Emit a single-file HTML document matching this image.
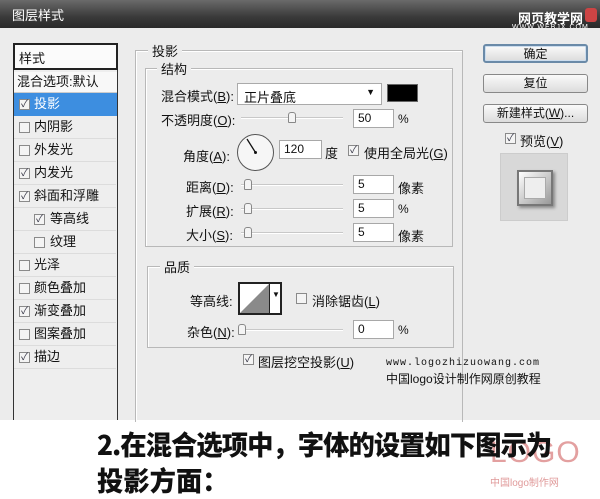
<!DOCTYPE html>
<html><head><meta charset="utf-8"><style>
*{margin:0;padding:0;box-sizing:border-box}
body{width:600px;height:496px;overflow:hidden;background:#fff;font-family:"Liberation Sans","Noto Sans CJK SC",sans-serif;font-size:12px;color:#111;position:relative}
.a{position:absolute;white-space:nowrap}
.title{left:0;top:0;width:600px;height:28px;background:linear-gradient(#6a6a6a,#3a3a3a 60%,#2a2a2a)}
.dlg{left:0;top:28px;width:600px;height:392px;background:#ececec}
.box{border:1px solid #b8b8b8;box-shadow:inset 1px 1px 0 #fff}
.cb{position:absolute;width:11px;height:11px;border:1px solid #8a8a8a;background:#f4f4f4;font-size:10px;line-height:9px;text-align:center;color:#334}
.inp{position:absolute;background:#fff;border:1px solid #a8a8a8;height:19px;padding-left:4px;line-height:17px;font-size:12px}
.sl{position:absolute;height:2px;background:#c8c8c8;border-bottom:1px solid #fff}
.th{position:absolute;width:8px;height:11px;border:1px solid #888;border-radius:3px 3px 1px 1px;background:#f4f4f4}
.btn{position:absolute;left:483px;width:105px;height:19px;border:1px solid #888;border-radius:3px;background:linear-gradient(#fafafa,#dcdcdc);text-align:center;line-height:17px;font-size:12px}
.row{position:absolute;left:14px;width:102px;height:23px;border-bottom:1px solid #dcdcdc;line-height:22px;padding-left:20px}
.row .cb{left:5px;top:6px}
</style></head><body>
<div class="a title"></div>
<div class="a" style="left:12px;top:5px;color:#fff;font-size:13px">图层样式</div>
<div class="a" style="left:518px;top:8px;color:#fff;font-size:13px;font-weight:bold">网页教学网</div>
<div class="a" style="left:512px;top:24px;color:#fff;font-size:7px;letter-spacing:1px">WWW.WEBJX.COM</div>
<div class="a" style="left:585px;top:8px;width:12px;height:14px;background:#c44;border-radius:3px"></div>
<div class="a dlg"></div>

<div class="a" style="left:13px;top:43px;width:105px;height:377px;border:1px solid #333;border-bottom:none;background:#eee"></div>
<div class="a" style="left:13px;top:43px;width:105px;height:27px;border:2px solid #222;background:#fbfbfb;padding:3px 4px;font-size:13px">样式</div>
<div class="a" style="left:14px;top:72px;width:103px;height:21px;border-bottom:1px solid #ccc;background:#f8f8f8;padding-left:3px;line-height:20px;font-size:13px">混合选项:默认</div>
<div class="a" style="left:14px;top:93px;width:103px;height:23px;background:#3d8ee0;color:#fff;line-height:22px;padding-left:20px;font-size:13px"><span class="cb" style="left:5px;top:6px">✓</span>投影</div>
<div class="row" style="top:116px;font-size:13px"><span class="cb"></span>内阴影</div>
<div class="row" style="top:139px;font-size:13px"><span class="cb"></span>外发光</div>
<div class="row" style="top:162px;font-size:13px"><span class="cb">✓</span>内发光</div>
<div class="row" style="top:185px;font-size:13px"><span class="cb">✓</span>斜面和浮雕</div>
<div class="row" style="top:208px;font-size:13px;padding-left:36px"><span class="cb" style="left:20px">✓</span>等高线</div>
<div class="row" style="top:231px;font-size:13px;padding-left:36px"><span class="cb" style="left:20px"></span>纹理</div>
<div class="row" style="top:254px;font-size:13px"><span class="cb"></span>光泽</div>
<div class="row" style="top:277px;font-size:13px"><span class="cb"></span>颜色叠加</div>
<div class="row" style="top:300px;font-size:13px"><span class="cb">✓</span>渐变叠加</div>
<div class="row" style="top:323px;font-size:13px"><span class="cb"></span>图案叠加</div>
<div class="row" style="top:346px;font-size:13px"><span class="cb">✓</span>描边</div>

<div class="a box" style="left:135px;top:50px;width:328px;height:372px;border-bottom:none"></div>
<div class="a" style="left:148px;top:41px;background:#ececec;padding:0 4px;font-size:13px">投影</div>
<div class="a box" style="left:145px;top:68px;width:308px;height:179px"></div>
<div class="a" style="left:157px;top:59px;background:#ececec;padding:0 4px;font-size:13px">结构</div>

<div class="a" style="left:161px;top:86px;font-size:13px">混合模式(<u>B</u>):</div>
<div class="a" style="left:237px;top:83px;width:145px;height:22px;background:#fff;border:1px solid #aaa;padding:3px 6px;font-size:13px">正片叠底<span style="position:absolute;right:6px;top:3px;font-size:9px">▼</span></div>
<div class="a" style="left:387px;top:84px;width:31px;height:18px;background:#000;border:1px solid #666"></div>

<div class="a" style="left:161px;top:110px;font-size:13px">不透明度(<u>O</u>):</div>
<div class="sl" style="left:241px;top:117px;width:102px"></div><div class="th" style="left:288px;top:112px"></div>
<div class="inp" style="left:353px;top:109px;width:41px">50</div><div class="a" style="left:398px;top:112px">%</div>

<div class="a" style="left:183px;top:146px;font-size:13px">角度(<u>A</u>):</div>
<div class="a" style="left:237px;top:134px;width:37px;height:37px;border:1px solid #555;border-radius:50%;background:#f6f6f6"></div>
<svg class="a" style="left:237px;top:134px" width="37" height="37"><line x1="18.5" y1="18.5" x2="10" y2="5" stroke="#111" stroke-width="1.3"/><circle cx="18.5" cy="18.5" r="1.5" fill="#111"/></svg>
<div class="inp" style="left:279px;top:140px;width:43px">120</div><div class="a" style="left:325px;top:143px;font-size:13px">度</div>
<span class="cb" style="left:348px;top:145px">✓</span><div class="a" style="left:364px;top:143px;font-size:13px">使用全局光(<u>G</u>)</div>

<div class="a" style="left:186px;top:177px;font-size:13px">距离(<u>D</u>):</div>
<div class="sl" style="left:241px;top:184px;width:102px"></div><div class="th" style="left:244px;top:179px"></div>
<div class="inp" style="left:353px;top:175px;width:41px">5</div><div class="a" style="left:398px;top:178px;font-size:13px">像素</div>
<div class="a" style="left:186px;top:201px;font-size:13px">扩展(<u>R</u>):</div>
<div class="sl" style="left:241px;top:208px;width:102px"></div><div class="th" style="left:244px;top:203px"></div>
<div class="inp" style="left:353px;top:199px;width:41px">5</div><div class="a" style="left:398px;top:202px">%</div>
<div class="a" style="left:186px;top:225px;font-size:13px">大小(<u>S</u>):</div>
<div class="sl" style="left:241px;top:232px;width:102px"></div><div class="th" style="left:244px;top:227px"></div>
<div class="inp" style="left:353px;top:223px;width:41px">5</div><div class="a" style="left:398px;top:226px;font-size:13px">像素</div>

<div class="a box" style="left:147px;top:266px;width:307px;height:82px"></div>
<div class="a" style="left:160px;top:257px;background:#ececec;padding:0 4px;font-size:13px">品质</div>
<div class="a" style="left:190px;top:291px;font-size:13px">等高线:</div>
<div class="a" style="left:238px;top:282px;width:44px;height:33px;border:2px solid #222;background:#fff"></div>
<svg class="a" style="left:240px;top:284px" width="29" height="29"><polygon points="0,29 29,0 29,29" fill="#8a8a8a"/></svg>
<div class="a" style="left:269px;top:284px;width:1px;height:29px;background:#222"></div>
<div class="a" style="left:272px;top:290px;font-size:8px">▼</div>
<span class="cb" style="left:296px;top:293px"></span><div class="a" style="left:312px;top:291px;font-size:13px">消除锯齿(<u>L</u>)</div>
<div class="a" style="left:187px;top:322px;font-size:13px">杂色(<u>N</u>):</div>
<div class="sl" style="left:241px;top:329px;width:102px"></div><div class="th" style="left:238px;top:324px"></div>
<div class="inp" style="left:353px;top:320px;width:41px">0</div><div class="a" style="left:398px;top:323px">%</div>

<span class="cb" style="left:243px;top:354px">✓</span><div class="a" style="left:258px;top:352px;font-size:13px">图层挖空投影(<u>U</u>)</div>
<div class="a" style="left:386px;top:358px;font-family:'Liberation Mono',monospace;font-size:10px;letter-spacing:1px">www.logozhizuowang.com</div>
<div class="a" style="left:386px;top:370px;font-size:12px">中国logo设计制作网原创教程</div>

<div class="btn" style="top:44px;border:2px solid #6a8aa8;box-shadow:inset 0 0 0 1px #cde">确定</div>
<div class="btn" style="top:74px">复位</div>
<div class="btn" style="top:104px">新建样式(<u>W</u>)...</div>
<span class="cb" style="left:505px;top:133px">✓</span><div class="a" style="left:520px;top:131px;font-size:13px">预览(<u>V</u>)</div>
<div class="a" style="left:500px;top:153px;width:68px;height:68px;background:#d8d8d8;border:1px solid #ccc"></div>
<div class="a" style="left:517px;top:170px;width:36px;height:36px;background:linear-gradient(135deg,#fff,#999);border:2px solid #777;box-shadow:2px 2px 3px #888"></div>
<div class="a" style="left:524px;top:177px;width:22px;height:22px;background:#eee;border:1px solid #aaa"></div>

<div class="a" style="left:490px;top:436px;font-size:30px;color:#e3a0a0;letter-spacing:1px">LOGO</div>
<div class="a" style="left:490px;top:474px;font-size:10px;color:#e09a9a">中国logo制作网</div>
<div class="a" style="left:97px;top:424px;font-size:27px;font-weight:900;transform:scaleX(.975);transform-origin:left;letter-spacing:-1px;font-family:'Noto Sans CJK SC',sans-serif">2.在混合选项中，字体的设置如下图示为</div>
<div class="a" style="left:97px;top:460px;font-size:27px;font-weight:900;transform:scaleX(.975);transform-origin:left;font-family:'Noto Sans CJK SC',sans-serif">投影方面：</div>
</body></html>
